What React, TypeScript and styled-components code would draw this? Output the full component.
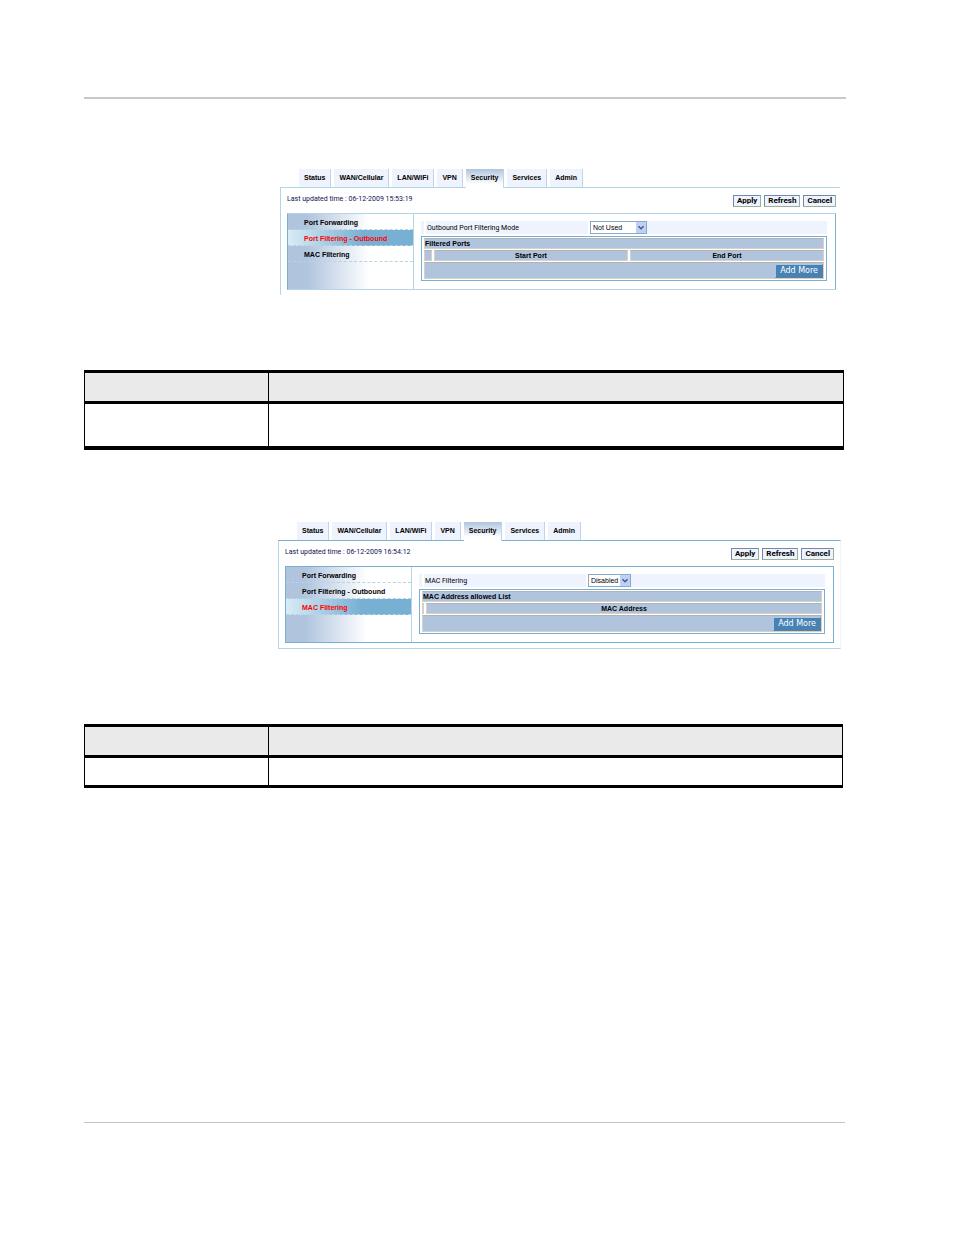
import React from "react";
import styled, { createGlobalStyle, css } from "styled-components";

const ui = '"Liberation Sans", Arial, sans-serif';
const steel = "#b0c4de";
const line = "#78b0d4";
const pale = "#b4d4e8";
const tint = "#eef3fd";

const GlobalStyle = createGlobalStyle`
  *, *::before, *::after { box-sizing: border-box; }
  body { margin: 0; background: #fff; color: #000; font: 7px/10px ${ui}; }
  button, select { font: inherit; margin: 0; }
  a { color: inherit; text-decoration: none; }
`;

const Page = styled.main`
  display: flex;
  flex-direction: column;
  padding: 97px 108px 112px 84px;
`;

const HeadRule = styled.hr`
  width: 100%;
  height: 2px;
  margin: 0 0 70px;
  border: 0;
  background: #c8c8c8;
`;

const FootRule = styled.hr`
  width: calc(100% - 1px);
  height: 1px;
  margin: 334px 0 0;
  border: 0;
  background: #c4c4c4;
`;

const Figure = styled.section<{ $framed?: boolean }>`
  display: flex;
  flex-direction: column;
  margin: ${(p) => (p.$framed ? "72px 5px 75px 194px" : "0 6px 75px 196px")};
`;

const Tabs = styled.nav`
  display: flex;
  gap: 3px;
  height: 19px;
  padding-left: 19px;
`;

const Tab = styled.a<{ $active?: boolean }>`
  height: ${(p) => (p.$active ? 19 : 18)}px;
  padding: 4px 5px 0;
  border-right: 1px solid #c3d3e8;
  background: ${(p) => (p.$active ? `linear-gradient(${steel}, #fff 80%)` : tint)};
  font-weight: bold;
  white-space: nowrap;
  z-index: 1;
`;

const Body = styled.div<{ $framed?: boolean }>`
  margin-top: -1px;
  padding: 7px ${(p) => (p.$framed ? 6 : 4)}px 5px 6px;
  border-top: 1px solid ${(p) => (p.$framed ? line : pale)};
  border-left: 1px solid ${pale};
  ${(p) =>
    p.$framed &&
    css`
      border-right: 1px solid ${tint};
      border-bottom: 1px solid ${pale};
    `}
`;

const Toolbar = styled.div`
  display: flex;
  justify-content: space-between;
  align-items: flex-start;
  height: 18px;
`;

const Updated = styled.span`
  color: #101050;
  font-family: Roboto, sans-serif;
  line-height: 8px;
`;

const Actions = styled.div`
  display: flex;
  gap: 3px;
`;

const ActionButton = styled.button`
  height: 12px;
  padding: 0 3px;
  border: 1px solid #7388b0;
  border-right-color: #9bb09b;
  border-bottom-color: #9bb09b;
  background: ${tint};
  color: #000;
  font: bold 8px/10px Roboto, sans-serif;
`;

const Workspace = styled.div<{ $framed?: boolean }>`
  display: grid;
  grid-template-columns: 126px 1fr;
  height: 77px;
  border: 1px solid ${line};
  border-top-color: ${(p) => (p.$framed ? line : pale)};
  border-bottom-color: ${(p) => (p.$framed ? line : pale)};
`;

const Menu = styled.nav`
  border-right: 1px solid ${pale};
  background: linear-gradient(90deg, ${steel} 15%, #fff 65%);
`;

const MenuItem = styled.a<{ $active?: boolean }>`
  display: block;
  height: 16px;
  padding: 4px 0 0 16px;
  border-bottom: 1px dashed ${pale};
  font-weight: bold;
  ${(p) =>
    p.$active &&
    css`
      color: #f00;
      background: linear-gradient(90deg, #d8ecf4, ${line} 60%);
    `}
`;

const Content = styled.div`
  padding: 7px 8px 0 7px;
`;

const Setting = styled.div`
  display: grid;
  grid-template-columns: 167px 1fr;
  gap: 2px;
  height: 13px;
  margin-bottom: 2px;
`;

const SettingLabel = styled.label`
  padding: 2px 0 0 6px;
  background: linear-gradient(90deg, ${tint} 3px, #fff 3px, #fff 5px, ${tint} 5px);
  font-family: Roboto, sans-serif;
`;

const SettingField = styled.div`
  display: flex;
  background: ${tint};
`;

const SelectBox = styled.div<{ $width: number }>`
  position: relative;
  width: ${(p) => p.$width}px;
  height: 13px;

  select {
    appearance: none;
    display: block;
    width: 100%;
    height: 100%;
    padding: 0 0 0 2px;
    border: 1px solid #86a9cb;
    border-radius: 0;
    background: #fff;
    color: #000;
    line-height: 11px;
  }

  svg {
    position: absolute;
    top: 1px;
    right: 1px;
    pointer-events: none;
  }
`;

const ListTable = styled.table`
  width: 100%;
  height: 45px;
  border: 1px solid ${line};
  border-spacing: 2px 1px;
  table-layout: fixed;

  th, td {
    padding: 0;
    border: 1px solid #d6d2c6;
    border-top-color: #b4b4b0;
    background: ${steel};
    line-height: 9px;
  }
`;

const TitleCell = styled.th`
  height: 11px;
  text-align: left;
`;

const FooterCell = styled.td`
  height: 16px;
  text-align: right;
`;

const AddButton = styled.button`
  display: block;
  height: 14px;
  margin-left: auto;
  padding: 0 4px;
  border: 1px solid #a9c8e4;
  border-right-color: #5f7d9c;
  border-bottom-color: #5f7d9c;
  background: #4682b4;
  color: #fff;
  font: 8px/12px "DejaVu Sans", Verdana, sans-serif;
`;

const DocTable = styled.table<{ $last: number }>`
  width: calc(100% - ${(p) => (p.$last === 4 ? 2 : 3)}px);
  border-spacing: 0;
  table-layout: fixed;

  th, td {
    padding: 0;
    border-left: 1px solid #000;
    border-bottom: 3px solid #000;
  }
  th { height: 34px; border-top: 3px solid #000; background: #eaeaea; }
  td { border-bottom-width: ${(p) => p.$last}px; }
  th:first-child { width: 184px; }
  th:last-child, td:last-child { border-right: 1px solid #000; }
`;

const DocCell = styled.td<{ $height: number }>`
  height: ${(p) => p.$height}px;
`;

const tabNames = ["Status", "WAN/Cellular", "LAN/WiFi", "VPN", "Security", "Services", "Admin"];
const menuNames = ["Port Forwarding", "Port Filtering - Outbound", "MAC Filtering"];

interface ConsoleProps {
  id: string;
  framed?: boolean;
  updated: string;
  current: string;
  setting: string;
  options: string[];
  selectWidth: number;
  title: string;
  markWidth: number;
  columns: string[];
}

function Console(p: ConsoleProps) {
  return (
    <Figure $framed={p.framed}>
      <Tabs aria-label="Sections">
        {tabNames.map((name) => (
          <Tab key={name} href="#" $active={name === "Security"}>
            {name}
          </Tab>
        ))}
      </Tabs>
      <Body $framed={p.framed}>
        <Toolbar>
          <Updated>Last updated time : {p.updated}</Updated>
          <Actions>
            <ActionButton type="button">Apply</ActionButton>
            <ActionButton type="button">Refresh</ActionButton>
            <ActionButton type="button">Cancel</ActionButton>
          </Actions>
        </Toolbar>
        <Workspace $framed={p.framed}>
          <Menu aria-label="Security pages">
            {menuNames.map((name) => (
              <MenuItem key={name} href="#" $active={name === p.current}>
                {name}
              </MenuItem>
            ))}
          </Menu>
          <Content>
            <Setting>
              <SettingLabel htmlFor={p.id}>{p.setting}</SettingLabel>
              <SettingField>
                <SelectBox $width={p.selectWidth}>
                  <select id={p.id} defaultValue={p.options[0]}>
                    {p.options.map((o) => (
                      <option key={o}>{o}</option>
                    ))}
                  </select>
                  <svg width="10" height="11" viewBox="0 0 10 11" aria-hidden="true">
                    <rect width="10" height="11" rx="1" fill="#bfd0f8" />
                    <path d="M2.5 4.2 5 6.7 7.5 4.2" fill="none" stroke="#46587e" strokeWidth="1.5" />
                  </svg>
                </SelectBox>
              </SettingField>
            </Setting>
            <ListTable>
              <colgroup>
                <col style={{ width: p.markWidth }} />
                {p.columns.map((c) => (
                  <col key={c} />
                ))}
              </colgroup>
              <thead>
                <tr>
                  <TitleCell colSpan={p.columns.length + 1}>{p.title}</TitleCell>
                </tr>
                <tr>
                  <td />
                  {p.columns.map((c) => (
                    <th key={c} scope="col">
                      {c}
                    </th>
                  ))}
                </tr>
              </thead>
              <tbody>
                <tr>
                  <FooterCell colSpan={p.columns.length + 1}>
                    <AddButton type="button">Add More</AddButton>
                  </FooterCell>
                </tr>
              </tbody>
            </ListTable>
          </Content>
        </Workspace>
      </Body>
    </Figure>
  );
}

function Description({ height, last }: { height: number; last: number }) {
  return (
    <DocTable $last={last}>
      <thead>
        <tr>
          <th />
          <th />
        </tr>
      </thead>
      <tbody>
        <tr>
          <DocCell $height={height} />
          <DocCell $height={height} />
        </tr>
      </tbody>
    </DocTable>
  );
}

export default function App() {
  return (
    <>
      <GlobalStyle />
      <Page>
        <HeadRule />
        <Console
          id="port-mode"
          updated="06-12-2009 15:53:19"
          current="Port Filtering - Outbound"
          setting="Outbound Port Filtering Mode"
          options={["Not Used", "Block", "Allow"]}
          selectWidth={57}
          title="Filtered Ports"
          markWidth={8}
          columns={["Start Port", "End Port"]}
        />
        <Description height={46} last={4} />
        <Console
          id="mac-mode"
          framed
          updated="06-12-2009 16:54:12"
          current="MAC Filtering"
          setting="MAC Filtering"
          options={["Disabled", "Enabled"]}
          selectWidth={43}
          title="MAC Address allowed List"
          markWidth={2}
          columns={["MAC Address"]}
        />
        <Description height={30} last={3} />
        <FootRule />
      </Page>
    </>
  );
}
